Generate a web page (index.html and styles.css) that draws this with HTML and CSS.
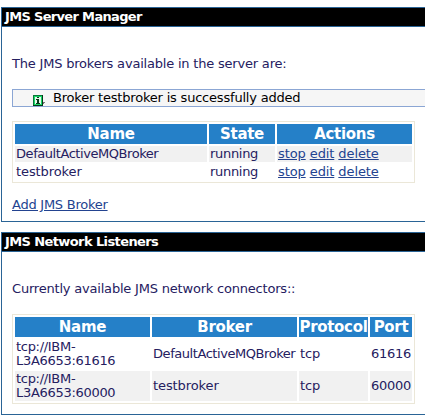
FILE: index.html
```html
<!DOCTYPE html>
<html lang="en">
<head>
<meta charset="utf-8">
<title>JMS Server Manager</title>
<link rel="stylesheet" href="styles.css">
</head>
<body>
<section class="panel manager">
  <h2><span class="t-manager">JMS Server Manager</span></h2>
  <div class="body">
    <p class="intro">The JMS brokers available in the server are:</p>
    <div class="message">
      <svg class="info" width="13" height="11" viewBox="0 0 13 11" shape-rendering="crispEdges">
        <path fill="#777" d="M10 7h2v1h-1v1h-1z"/>
        <path fill="#053818" d="M0 0h10v11H0z"/>
        <path fill="#087838" d="M0 0h9v1H1v9H0z"/>
        <path fill="#18d868" d="M1 1h8v9H1z"/>
        <path fill="#e4f8e8" d="M2 2h6v7H2z"/>
        <path fill="#053818" d="M4 2h2v1H4zM3 4h3v4h1v1H3V8h1V5H3z"/>
      </svg>
      <span>Broker testbroker is successfully added</span>
    </div>
    <table class="brokers">
      <colgroup><col class="b-name"><col class="b-state"><col class="b-actions"></colgroup>
      <tr><th>Name</th><th>State</th><th>Actions</th></tr>
      <tr class="shade"><td class="long">DefaultActiveMQBroker</td><td class="state">running</td><td><a href="#">stop</a> <a href="#">edit</a> <a href="#">delete</a></td></tr>
      <tr><td>testbroker</td><td class="state">running</td><td><a href="#">stop</a> <a href="#">edit</a> <a href="#">delete</a></td></tr>
    </table>
    <a class="add" href="#">Add JMS Broker</a>
  </div>
</section>
<section class="panel listeners">
  <h2><span class="t-listeners">JMS Network Listeners</span></h2>
  <div class="body">
    <p class="intro">Currently available JMS network connectors::</p>
    <table class="connectors">
      <colgroup><col class="c-name"><col class="c-broker"><col class="c-protocol"><col class="c-port"></colgroup>
      <tr><th>Name</th><th>Broker</th><th>Protocol</th><th>Port</th></tr>
      <tr><td class="state">tcp://IBM-<br>L3A6653:61616</td><td class="long">DefaultActiveMQBroker</td><td>tcp</td><td class="state">61616</td></tr>
      <tr class="shade"><td class="state">tcp://IBM-<br>L3A6653:60000</td><td>testbroker</td><td>tcp</td><td class="state">60000</td></tr>
    </table>
  </div>
</section>
</body>
</html>
```
FILE: styles.css
```css
* { box-sizing: border-box; }
html { overflow: hidden; background: #fff; }
body {
  margin: 0;
  padding: 7px 3px 0 1px;
  background: #fff;
  color: #25205f;
  font: 13px/14px "DejaVu Sans", Verdana, sans-serif;
  letter-spacing: -0.1px;
}
.panel {
  border: 1px solid #2a6496;
  border-right: 0;
  background: #fff;
}
.manager { height: 215px; margin-bottom: 10px; }
.listeners { height: 183px; }
h2 {
  height: 19px;
  margin: 0;
  padding-left: 3px;
  border-bottom: 1px solid #2a6496;
  background: #000;
  color: #fff;
  font-size: 13px;
  font-weight: bold;
  line-height: 18px;
  white-space: nowrap;
}
.t-manager { letter-spacing: -0.67px; }
.t-listeners { letter-spacing: -0.6px; }
.body { padding: 29px 0 0 10px; }
.intro { height: 16px; margin: 0; line-height: 16px; letter-spacing: -0.2px; white-space: nowrap; }
.message {
  display: flex;
  height: 18px;
  margin: 17px 0 14px;
  padding-left: 20px;
  border: 1px solid #8ba6d4;
  border-right: 0;
  background: #f6f6f6;
  color: #000;
  line-height: 16px;
  letter-spacing: -0.2px;
  white-space: nowrap;
}
.info { flex: none; margin: 5px 7px 0 0; }
table {
  width: 403px;
  table-layout: fixed;
  border: 1px solid #ebe7d8;
  border-collapse: separate;
  border-spacing: 2px;
}
th {
  height: 20px;
  padding: 0;
  background: #2580c8;
  color: #fff;
  font-size: 15px;
  line-height: 20px;
  letter-spacing: -0.3px;
}
td { padding: 1px; line-height: 14px; white-space: nowrap; vertical-align: middle; }
td.long { letter-spacing: -0.44px; }
td.state { letter-spacing: -0.3px; }
.shade td { background: #f1f1f1; }
a { color: #234390; text-decoration: underline; }
.b-name { width: 192px; }
.b-state { width: 66px; }
.b-actions { width: 135px; }
.add { display: inline-block; margin-top: 14px; line-height: 16px; letter-spacing: -0.25px; }
.connectors { margin-top: 17px; }
.c-name { width: 135px; }
.c-broker { width: 145px; }
.c-protocol { width: 69px; }
.c-port { width: 42px; }
```
